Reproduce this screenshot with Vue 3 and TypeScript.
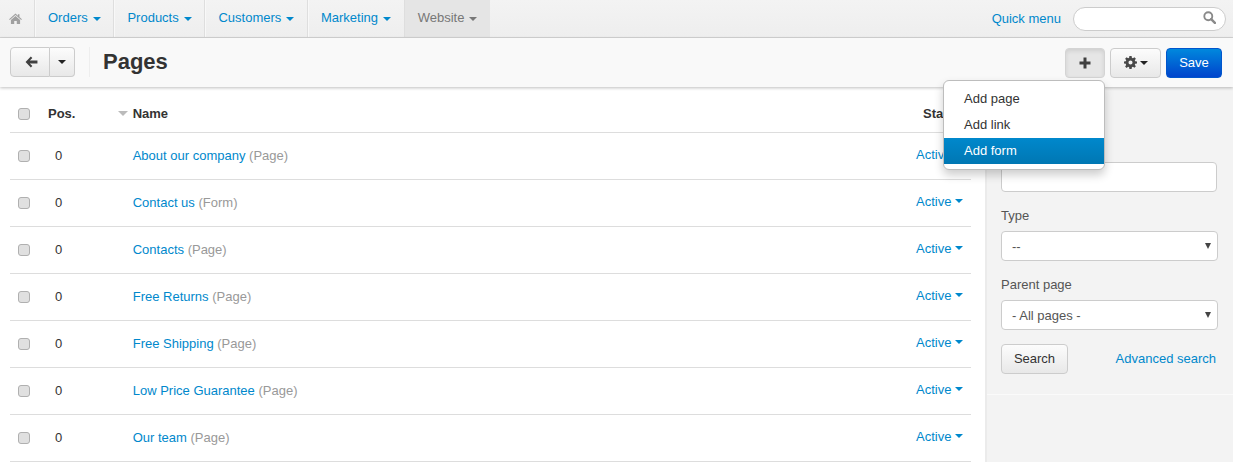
<script setup lang="ts">
const navItems: string[] = ['Orders', 'Products', 'Customers', 'Marketing']
const rows: { name: string; kind: string }[] = [
  { name: 'About our company', kind: 'Page' },
  { name: 'Contact us', kind: 'Form' },
  { name: 'Contacts', kind: 'Page' },
  { name: 'Free Returns', kind: 'Page' },
  { name: 'Free Shipping', kind: 'Page' },
  { name: 'Low Price Guarantee', kind: 'Page' },
  { name: 'Our team', kind: 'Page' },
]
</script>

<template>
  <div class="page">
    <header class="topbar">
      <nav class="nav">
        <a class="nav-home">
          <svg width="13" height="11" viewBox="0 0 14 12"><path fill="#a0a0a0" d="M7 0.6 9.6 2.9V1.4h1.7v3L14 6.8l-.8.8L7 2.2.8 7.6 0 6.8zM2 7.600 7 3.300l5 4.300V12H8.400V8.600H5.600V12H2z"/></svg>
        </a>
        <a v-for="item in navItems" :key="item" class="nav-item">{{ item }}<i class="caret"></i></a>
        <a class="nav-item nav-active">Website<i class="caret"></i></a>
      </nav>
      <div class="quick">
        <a class="link">Quick menu</a>
        <div class="quick-search">
          <svg width="13" height="13" viewBox="0 0 14 14"><circle cx="5.700" cy="5.700" r="4.300" fill="none" stroke="#8a8a8a" stroke-width="2"/><path d="M8.800 8.800 12.800 12.800" stroke="#8a8a8a" stroke-width="2.600" stroke-linecap="round"/></svg>
        </div>
      </div>
    </header>

    <section class="toolbar">
      <div class="btn-group">
        <button class="btn back-btn">
          <svg width="13" height="12" viewBox="0 0 14 12"><path fill="#404040" d="M6.300.2 7.900 1.800 5.200 4.400H13.400v3.200H5.200l2.700 2.600-1.600 1.600L.6 6z"/></svg>
        </button>
        <button class="btn more-btn"><i class="caret dark"></i></button>
      </div>
      <h1 class="title">Pages</h1>
      <div class="actions">
        <button class="btn plus-btn">
          <svg width="12" height="12" viewBox="0 0 12 12"><path fill="#404040" d="M4.500 .5h3v4h4v3h-4v4h-3v-4h-4v-3h4z"/></svg>
        </button>
        <button class="btn gear-btn">
          <svg width="13" height="13" viewBox="0 0 14 14"><path fill="#484848" fill-rule="evenodd" d="M5.800 0h2.400l.3 1.900 1.100.5L11.200 1.300 12.800 3 11.600 4.500l.5 1.200L14 6v2.100l-1.900.3-.5 1.100 1.200 1.600-1.600 1.600-1.600-1.100-1.100.4L8.200 14H5.800l-.3-1.900-1.100-.5-1.600 1.200L1.200 11.200l1.100-1.600-.4-1.200L0 8.100V6l1.900-.3.5-1.200L1.200 3 2.800 1.300l1.600 1.100 1.100-.5zM7 4.800a2.200 2.200 0 1 0 0 4.400 2.200 2.200 0 0 0 0-4.400z"/></svg>
          <i class="caret dark"></i>
        </button>
        <button class="btn save-btn">Save</button>
      </div>
    </section>

    <main class="content">
      <div class="list">
        <div class="row head">
          <span class="check"></span>
          <span class="pos">Pos.</span>
          <span class="name"><i class="sort"></i>Name</span>
          <span class="status">Status</span>
        </div>
        <div v-for="row in rows" :key="row.name" class="row">
          <span class="check"></span>
          <span class="pos num">0</span>
          <span class="name"><a class="link">{{ row.name }}</a> <span class="kind">({{ row.kind }})</span></span>
          <a class="status link active">Active<i class="caret"></i></a>
        </div>
      </div>

      <aside class="side">
        <form class="filters" @submit.prevent>
          <label class="field-name">
            <input class="input" type="text" />
          </label>
          <label>
            <span>Type</span>
            <span class="select-wrap"><select class="select"><option>--</option></select></span>
          </label>
          <label>
            <span>Parent page</span>
            <span class="select-wrap"><select class="select"><option>- All pages -</option></select></span>
          </label>
          <div class="search-row">
            <button class="btn search-btn">Search</button>
            <a class="link">Advanced search</a>
          </div>
        </form>
      </aside>
    </main>

    <ul class="menu">
      <li>Add page</li>
      <li>Add link</li>
      <li class="hover">Add form</li>
    </ul>
  </div>
</template>

<style>
html, body { margin: 0; padding: 0; }
</style>

<style scoped>
* { box-sizing: border-box; }
.page {
  position: relative;
  width: 1233px;
  height: 462px;
  overflow: hidden;
  background: #fff;
  font-family: "Liberation Sans", Arial, sans-serif;
  font-size: 13px;
  line-height: 18px;
  color: #333;
}
.link { color: #0088cc; text-decoration: none; }
.caret {
  display: inline-block;
  width: 0;
  height: 0;
  margin-left: 4px;
  vertical-align: 3px;
  border-left: 4px solid transparent;
  border-right: 4px solid transparent;
  border-top: 4px solid #0088cc;
}
.caret.dark { border-top-color: #222; margin-left: 0; }

.topbar {
  height: 38px;
  display: flex;
  justify-content: space-between;
  background: linear-gradient(#f3f3f3, #eeeeee);
  border-bottom: 1px solid #d5d5d5;
}
.nav { display: flex; }
.nav-home {
  width: 35px;
  display: flex;
  align-items: center;
  justify-content: center;
  border-right: 1px solid #dedede;
  box-shadow: 1px 0 0 #f8f8f8;
  padding-right: 4px;
}
.nav-item {
  display: flex;
  align-items: center;
  padding: 0 12.7px 1px 13px;
  color: #0088cc;
  border-right: 1px solid #dedede;
  box-shadow: 1px 0 0 #f8f8f8;
}
.nav-item .caret { margin-left: 5px; margin-top: 2px; }
.nav-active {
  color: #777;
  background: #e5e5e5;
  border-right: none;
  box-shadow: none;
  padding-right: 13px;
}
.nav-active .caret { border-top-color: #777; }
.quick { display: flex; align-items: center; gap: 12px; padding-right: 7px; }
.quick-search {
  width: 153px;
  height: 24px;
  background: #fff;
  border: 1px solid #ccc;
  border-radius: 12px;
  display: flex;
  align-items: center;
  justify-content: flex-end;
  padding-right: 9px;
  padding-bottom: 2px;
}

.toolbar {
  position: relative;
  z-index: 1;
  height: 49px;
  display: flex;
  align-items: center;
  padding: 0 11px 1px 10px;
  background: #f9f9f9;
  box-shadow: 0 1px 3px rgba(0, 0, 0, 0.25);
}
.btn {
  height: 30px;
  border: 1px solid #cccccc;
  border-radius: 4px;
  background: linear-gradient(#fcfcfc, #e8e8e8);
  font: 13px "Liberation Sans", Arial, sans-serif;
  color: #333;
  padding: 0;
  display: inline-flex;
  align-items: center;
  justify-content: center;
}
.btn-group { display: flex; }
.back-btn { width: 40px; border-radius: 4px 0 0 4px; padding-left: 2px; }
.more-btn { width: 25px; border-left: none; border-radius: 0 4px 4px 0; }
.title {
  margin: 0 0 0 14px;
  padding-left: 13px;
  border-left: 1px solid #eeeeee;
  font-size: 22px;
  line-height: 30px;
  font-weight: 700;
  color: #333;
}
.actions { margin-left: auto; display: flex; gap: 5px; padding-top: 1px; }
.plus-btn { width: 40px; background: #e6e6e6; border-color: #d4d4d4; box-shadow: inset 0 2px 4px rgba(0,0,0,.1); }
.gear-btn { width: 51px; gap: 3px; }
.save-btn {
  width: 56px;
  color: #fff;
  border-color: #0055cc;
  background: linear-gradient(#0088dd, #0044cc);
}

.content { display: flex; height: 375px; }
.list { width: 961px; margin-left: 10px; flex: none; }
.row {
  height: 47px;
  display: flex;
  align-items: center;
  border-bottom: 1px solid #dddddd;
}
.row.head { height: 46px; padding-top: 8px; font-weight: 700; }
.check {
  width: 12px;
  height: 12px;
  margin-left: 8px;
  border: 1px solid #b0b0b0;
  border-radius: 3px;
  background: #e0e0e0;
  flex: none;
}
.pos { width: 84.7px; margin-left: 18px; flex: none; }
.pos.num { padding-left: 7px; }
.name { position: relative; flex: 1; }
.sort {
  position: absolute;
  left: -15px;
  top: 6px;
  border-left: 5px solid transparent;
  border-right: 5px solid transparent;
  border-top: 5px solid #bbb;
}
.kind { color: #999; }
.status { width: 55px; flex: none; }
.status.active { padding-bottom: 2px; }
.head .status { width: 48px; }

.side {
  flex: none;
  width: 248px;
  height: 100%;
  margin-left: 14px;
  background: #f3f3f3;
  border-left: 2px solid #ebebeb;
}
.filters {
  height: 308px;
  padding: 0 15px 0 14px;
  border-bottom: 1px solid #fafafa;
  display: flex;
  flex-direction: column;
  gap: 15px;
}
.filters label { display: flex; flex-direction: column; gap: 6px; color: #555; }
.field-name { margin-top: 75px; }
.input {
  width: 216px;
  height: 30px;
  border: 1px solid #ccc;
  border-radius: 4px;
  background: #fff;
}
.select-wrap { position: relative; display: block; width: 217px; height: 30px; }
.select-wrap::after {
  content: "";
  position: absolute;
  right: 7px;
  top: 12px;
  border-left: 3px solid transparent;
  border-right: 3px solid transparent;
  border-top: 6px solid #444;
  pointer-events: none;
}
.select {
  appearance: none;
  display: block;
  width: 217px;
  height: 30px;
  border: 1px solid #ccc;
  border-radius: 4px;
  background: #fff;
  color: #555;
  padding: 1px 0 0 10px;
  font: 13px "Liberation Sans", Arial, sans-serif;
}
.search-row { display: flex; align-items: center; justify-content: space-between; margin-top: -1px; padding-right: 2px; }
.search-btn { width: 67px; height: 30px; padding-bottom: 1px; }

.menu {
  position: absolute;
  left: 943px;
  top: 80px;
  z-index: 5;
  width: 162px;
  height: 90px;
  margin: 0;
  padding: 5px 0;
  list-style: none;
  background: #fff;
  border: 1px solid #bdbdbd;
  border-radius: 6px;
  box-shadow: 0 5px 10px rgba(0, 0, 0, 0.2);
}
.menu li { height: 26px; line-height: 26px; padding-left: 20px; color: #333; }
.menu li.hover { color: #fff; background: linear-gradient(#0088cc, #0077b3); }
</style>
